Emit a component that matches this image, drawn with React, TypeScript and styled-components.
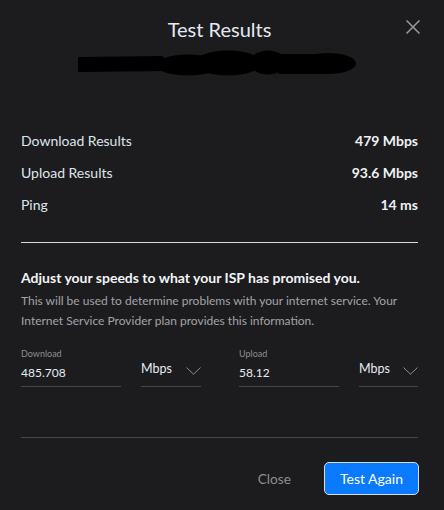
import React from "react";
import styled, { createGlobalStyle } from "styled-components";

const Global = createGlobalStyle`
  html, body { margin: 0; padding: 0; background: #1c1c1e; }
  body { font-family: Lato, "Open Sans", sans-serif; -webkit-font-smoothing: antialiased; }
  * { box-sizing: border-box; }
`;

const Dialog = styled.div`
  width: 444px;
  height: 510px;
  background: #1c1c1e;
  padding: 17px 26px 0 21px;
  display: flex;
  flex-direction: column;
  position: relative;
`;

const Header = styled.div`
  display: flex;
  flex-direction: column;
  align-items: center;
`;

const Title = styled.h1`
  margin: 0;
  font-size: 20px;
  line-height: 24px;
  font-weight: 400;
  color: #e4e9f2;
`;

const CloseIcon = styled.button`
  position: absolute;
  top: 20px;
  left: 406px;
  width: 14px;
  height: 14px;
  padding: 0;
  border: 0;
  background: transparent;
  display: flex;
`;

const Scribble = styled.svg`
  display: block;
  margin-top: 9px;
  margin-left: -3px;
`;

const Stats = styled.div`
  margin-top: 46px;
  display: flex;
  flex-direction: column;
`;

const StatRow = styled.div`
  display: flex;
  justify-content: space-between;
  align-items: center;
  height: 32px;
  font-size: 14px;
  color: #dfe4ec;
`;

const StatValue = styled.span`
  font-weight: 700;
  color: #eef1f6;
`;

const Divider = styled.hr<{ $tone: "light" | "dark" }>`
  margin: ${(p) => (p.$tone === "light" ? "22px 0 0" : "50px 0 0")};
  border: 0;
  height: 1px;
  background: ${(p) => (p.$tone === "light" ? "#d9d9db" : "#48484b")};
`;

const Heading = styled.h2`
  margin: 25px 0 0;
  font-size: 14px;
  line-height: 20px;
  font-weight: 700;
  color: #f2f4f8;
`;

const Note = styled.p`
  margin: 3px 0 0;
  font-size: 12px;
  line-height: 20px;
  color: #a3a3a6;
`;

const Fields = styled.div`
  margin-top: 17px;
  display: grid;
  grid-template-columns: 180px 1fr;
  column-gap: 38px;
`;

const FieldGroup = styled.div`
  display: flex;
  align-items: flex-end;
  gap: 20px;
`;

const InputField = styled.div`
  width: 100px;
  display: flex;
  flex-direction: column;
  border-bottom: 1px solid #46464a;
  padding-bottom: 5px;
`;

const FieldLabel = styled.div`
  font-size: 9px;
  line-height: 12px;
  color: #8d8d91;
`;

const FieldValue = styled.div`
  margin-top: 5px;
  font-size: 12px;
  line-height: 16px;
  color: #e6ebf3;
`;

const Select = styled.div`
  flex: 1;
  display: flex;
  align-items: center;
  justify-content: space-between;
  border-bottom: 1px solid #46464a;
  padding-bottom: 9px;
  font-size: 12.5px;
  line-height: 16px;
  color: #e6ebf3;
`;

const Footer = styled.div`
  margin-top: 24px;
  display: flex;
  justify-content: flex-end;
  align-items: center;
  gap: 33px;
`;

const TextButton = styled.button`
  border: 0;
  background: transparent;
  padding: 0;
  margin-top: -1px;
  font-family: inherit;
  font-size: 13.7px;
  color: #8c8c90;
`;

const PrimaryButton = styled.button`
  width: 95px;
  height: 33px;
  margin-right: -1px;
  border: 1px solid #d6deea;
  border-radius: 5px;
  background: #0a7aff;
  color: #ffffff;
  font-family: inherit;
  font-size: 14px;
  padding: 0;
`;

const Chevron = () => (
  <svg width="15" height="8" viewBox="0 0 15 8" style={{ marginTop: 3 }}>
    <path d="M0.5 0.5 L7.5 7.2 L14.5 0.5" fill="none" stroke="#8d8d91" strokeWidth="1" />
  </svg>
);

const fields = [
  { label: "Download", value: "485.708" },
  { label: "Upload", value: "58.12" },
];

const stats = [
  { label: "Download Results", value: "479 Mbps" },
  { label: "Upload Results", value: "93.6 Mbps" },
  { label: "Ping", value: "14 ms" },
];

export default function App() {
  return (
    <>
      <Global />
      <Dialog>
        <Header>
          <Title>Test Results</Title>
          <Scribble width="280" height="28" viewBox="0 0 280 28">
            <g fill="#000">
              <path d="M0 7 L85 6 L92 21 L0 22 Z" />
              <ellipse cx="110" cy="15" rx="32" ry="10.5" />
              <ellipse cx="150" cy="13" rx="34" ry="12.5" />
              <ellipse cx="190" cy="12.5" rx="18" ry="12" />
              <ellipse cx="212" cy="14" rx="16" ry="10" />
              <ellipse cx="250" cy="13.5" rx="28" ry="10.5" />
              <rect x="200" y="4" width="50" height="20" />
            </g>
          </Scribble>
        </Header>
        <CloseIcon aria-label="Close">
          <svg width="14" height="14" viewBox="0 0 14 14">
            <path d="M0.5 0.5 L13.5 13.5 M13.5 0.5 L0.5 13.5" stroke="#9a9a9e" strokeWidth="1.5" />
          </svg>
        </CloseIcon>

        <Stats>
          {stats.map((s) => (
            <StatRow key={s.label}>
              <span>{s.label}</span>
              <StatValue>{s.value}</StatValue>
            </StatRow>
          ))}
        </Stats>

        <Divider $tone="light" />

        <Heading>Adjust your speeds to what your ISP has promised you.</Heading>
        <Note>
          This will be used to determine problems with your internet service. Your Internet
          Service Provider plan provides this information.
        </Note>

        <Fields>
          {fields.map((f) => (
            <FieldGroup key={f.label}>
              <InputField>
                <FieldLabel>{f.label}</FieldLabel>
                <FieldValue>{f.value}</FieldValue>
              </InputField>
              <Select>
                <span>Mbps</span>
                <Chevron />
              </Select>
            </FieldGroup>
          ))}
        </Fields>

        <Divider $tone="dark" />

        <Footer>
          <TextButton>Close</TextButton>
          <PrimaryButton>Test Again</PrimaryButton>
        </Footer>
      </Dialog>
    </>
  );
}
